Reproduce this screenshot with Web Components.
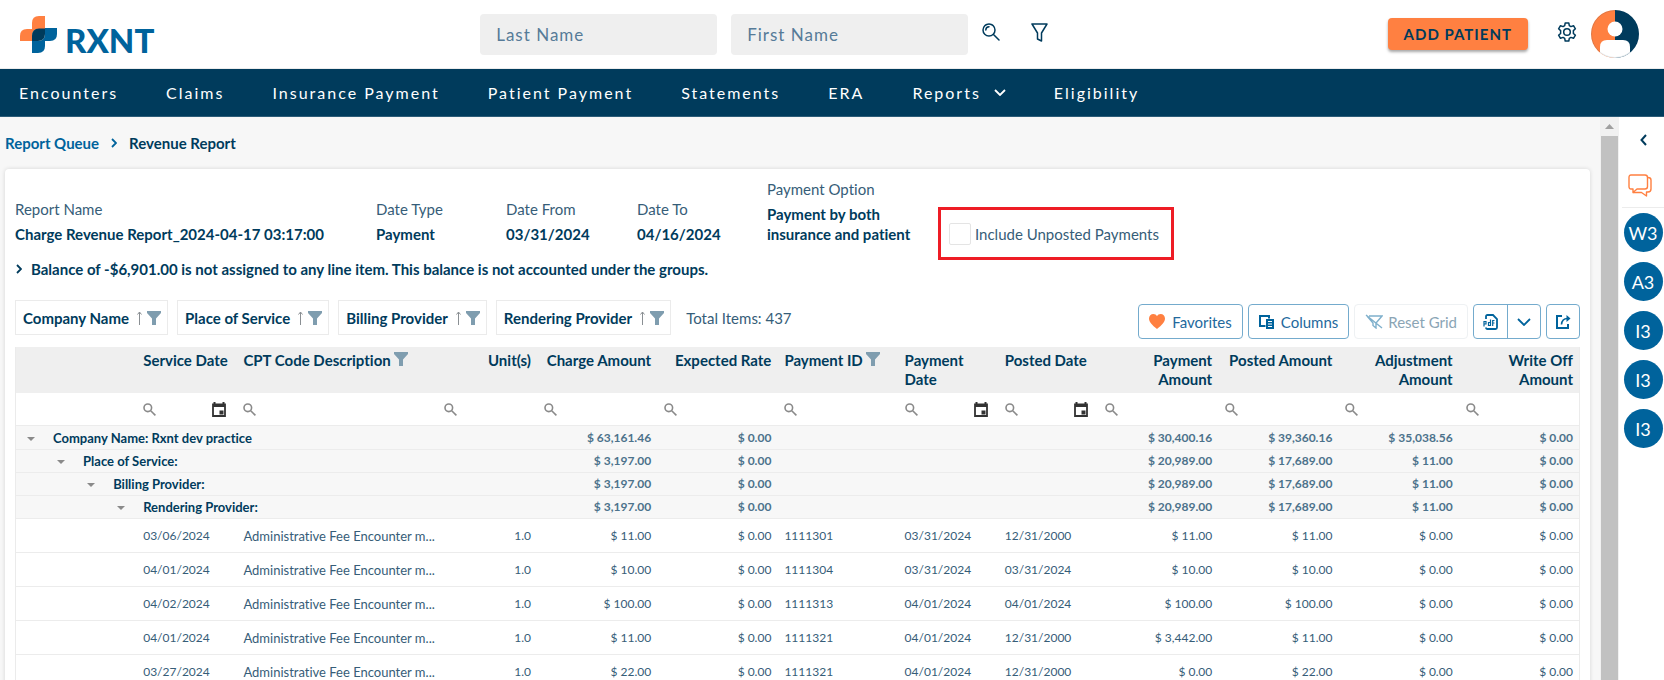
<!DOCTYPE html>
<html lang="en">
<head>
<meta charset="utf-8">
<title>RXNT - Revenue Report</title>
<style>
  html, body { margin: 0; height: 100%; }
  body {
    --navy: #003b5c;
    --blue: #00639c;
    --orange: #ff8041;
    --soft: #365d78;
    --line: #ececec;
    font: 15px/20px Lato, "Open Sans", sans-serif;
    font-variant-ligatures: none;
    color: var(--navy);
    background: #fff;
  }
</style>
</head>
<body>
<app-shell>
  <app-header slot="header"></app-header>
  <app-nav slot="nav">
    <nav-link>Encounters</nav-link>
    <nav-link>Claims</nav-link>
    <nav-link>Insurance Payment</nav-link>
    <nav-link>Patient Payment</nav-link>
    <nav-link>Statements</nav-link>
    <nav-link>ERA</nav-link>
    <nav-link menu>Reports</nav-link>
    <nav-link>Eligibility</nav-link>
  </app-nav>
  <bread-crumb>
    <span slot="parent">Report Queue</span>
    <span slot="current">Revenue Report</span>
  </bread-crumb>
  <report-card>
    <report-field slot="fields" label="Report Name">Charge Revenue Report_2024-04-17 03:17:00</report-field>
    <report-field slot="fields" label="Date Type">Payment</report-field>
    <report-field slot="fields" label="Date From">03/31/2024</report-field>
    <report-field slot="fields" label="Date To">04/16/2024</report-field>
    <report-field slot="fields" label="Payment Option">Payment by both insurance and patient</report-field>
    <check-field slot="fields">Include Unposted Payments</check-field>
    <balance-note slot="note">Balance of -$6,901.00 is not assigned to any line item. This balance is not accounted under the groups.</balance-note>
    <group-chip slot="chips">Company Name</group-chip>
    <group-chip slot="chips">Place of Service</group-chip>
    <group-chip slot="chips">Billing Provider</group-chip>
    <group-chip slot="chips">Rendering Provider</group-chip>
    <span slot="total">Total Items: 437</span>
    <tool-button slot="tools" icon="heart">Favorites</tool-button>
    <tool-button slot="tools" icon="columns">Columns</tool-button>
    <tool-button slot="tools" icon="reset" disabled>Reset Grid</tool-button>
    <split-button slot="tools"></split-button>
    <tool-button slot="tools" icon="export" label="Export"></tool-button>
    <report-grid></report-grid>
  </report-card>
  <side-rail slot="rail">
    <user-badge>W3</user-badge>
    <user-badge>A3</user-badge>
    <user-badge>I3</user-badge>
    <user-badge>I3</user-badge>
    <user-badge>I3</user-badge>
  </side-rail>
</app-shell>

<script>
const define = (name, html, setup) => {
  const template = document.createElement('template');
  template.innerHTML = html;
  customElements.define(name, class extends HTMLElement {
    constructor() {
      super();
      this.attachShadow({ mode: 'open' }).append(template.content.cloneNode(true));
    }
    connectedCallback() {
      if (setup && !this.ready) { this.ready = true; setup(this, this.shadowRoot); }
    }
  });
};

/* Icons: [width, height, markup] */
const ICONS = {
  search: [18, 18, '<g fill="none" stroke="currentColor" stroke-width="1.5" stroke-linecap="round"><circle cx="7" cy="7" r="6"/><path d="M11.5 11.5L17 17M3.8 7A3.3 3.3 0 0 1 7 3.8"/></g>'],
  funnel: [17, 19, '<path d="M1 1h15l-5.5 9v8l-4-2v-6z" fill="none" stroke="currentColor" stroke-width="1.5" stroke-linejoin="round"/>'],
  gear: [20, 20, '<g fill="none" stroke="currentColor" stroke-width="1.5" stroke-linejoin="round"><path d="M8.2 1h3.6l.5 2.6 1.6 1 2.6-.9 1.9 3.1-2 1.8v2.8l2 1.8-1.9 3.1-2.6-.9-1.6 1-.5 2.6H8.2l-.5-2.6-1.6-1-2.6.9-1.9-3.1 2-1.8V8.600l-2-1.8 1.900-3.100 2.600.9 1.600-1z"/><circle cx="10" cy="10" r="3.300"/></g>'],
  avatar: [48, 48, '<clipPath id="c"><circle cx="24" cy="24" r="24"/></clipPath><g clip-path="url(#c)"><path d="M0 0h24v48H0z" fill="#ff8041"/><path d="M24 0h24v48H24z" fill="#003b5c"/><circle cx="24" cy="19" r="7.500" fill="#fff"/><path d="M9 48V37q0-7 7-7h16q7 0 7 7v11z" fill="#fff"/></g><circle cx="24" cy="24" r="23.500" fill="none" stroke="#003b5c" stroke-opacity=".12"/>'],
  mark: [37, 37, '<path d="M12 25H0v-5q0-7 7-7h5V7q0-7 7-7h6v13h-6q-7 0-7 7z" fill="#ff8041"/><path d="M25 12h12v6q0 7-7 7h-5v5q0 7-7 7h-6V25h6q7 0 7-7z" fill="#00639c"/><path d="M12 25v-5q0-7.500 7-7.500h6V18q0 7-7 7z" fill="#003b5c"/>'],
  down: [12, 7, '<path d="M1 1l5 5 5-5" fill="none" stroke="currentColor" stroke-width="1.800"/>'],
  downWide: [14, 8, '<path d="M1 1l6 6 6-6" fill="none" stroke="currentColor" stroke-width="1.800"/>'],
  right: [6, 10, '<path d="M1 1l4 4-4 4" fill="none" stroke="currentColor" stroke-width="1.800"/>'],
  left: [7, 12, '<path d="M6 1L1.500 6 6 11" fill="none" stroke="currentColor" stroke-width="2"/>'],
  chat: [24, 23, '<g fill="none" stroke="#ff8041" stroke-width="1.400" stroke-linejoin="round"><path d="M3 1h14q2.500 0 2.500 2.500v9q0 2.500-2.500 2.500H9l-4 3.500V15H3Q1 15 1 12.500v-9Q1 1 3 1z"/><path d="M20 3.500q3 0 3 2.500v9q0 3-3 3h-1.500V22l-5-3.500H5"/></g>'],
  sort: [5, 14, '<path d="M2.500 14V1M.5 3.500l2-2.500 2 2.500" fill="none" stroke="#8a8f93"/>'],
  filter: [14, 14, '<path d="M0 0h14v2L9 7.500V14H5V7.500L0 2z" fill="#7f9daf"/>'],
  heart: [16, 15, '<path d="M8 15C3 11 0 8 0 4.500 0 2 2 0 4.300 0 6 0 7.300.9 8 2.200 8.700.9 10 0 11.700 0 14 0 16 2 16 4.500 16 8 13 11 8 15z" fill="#ff8041"/>'],
  columns: [15, 14, '<path d="M6.500 11H1V1h9v2.500" fill="none" stroke="#00639c" stroke-width="2"/><path d="M7 4h8v10H7z" fill="#00639c"/><path d="M9 6.500h4M9 9h4M9 11.500h4" stroke="#fff"/>'],
  reset: [18, 15, '<g fill="none" stroke="#7fb0cc" stroke-width="1.400"><path d="M4 2h13l-6 7v5l-3-2.500V9L2 2M1 1l16 13"/></g>'],
  pdf: [15, 16, '<path d="M3 5V2.500Q3 1 4.500 1H10l4 4v8.500q0 1.500-1.500 1.500h-8Q3 15 3 13.500" fill="none" stroke="#00639c" stroke-width="1.800"/><path d="M1 12.500V7.500h2V10H1M7.500 5.500v6H5.500V8.500h2M9.700 12V6.500h1.800M9.700 9h1.800" fill="none" stroke="#00639c" stroke-width="1.200"/>'],
  export: [15, 15, '<path d="M6 2H1v12h11v-4" fill="none" stroke="#00639c" stroke-width="2"/><path d="M5.500 10.500Q6 4.500 11.500 4.500" fill="none" stroke="#00639c" stroke-width="1.600"/><path d="M10.500 1l4 3.500-4 3.500z" fill="#00639c"/>'],
  lens: [13, 13, '<g fill="none" stroke="#8a8a8a" stroke-width="1.600"><circle cx="4.800" cy="4.800" r="3.800"/><path d="M7.700 7.700L12.400 12.400"/></g>'],
  calendar: [14, 15, '<path d="M2.500 0v3M11.500 0v3" stroke="#333" stroke-width="2"/><path d="M1 2.500h12V14H1z" fill="none" stroke="#333" stroke-width="1.800"/><path d="M1 2h12v3H1zM7.500 8.500h4v4h-4z" fill="#333"/>'],
  caret: [8, 4, '<path d="M0 0h8L4 4z" fill="#8a8a8a"/>'],
  caretUp: [9, 5, '<path d="M0 5h9L4.500 0z" fill="#a0a0a0"/>']
};
const icon = name => {
  const [w, h, body] = ICONS[name];
  return `<svg width="${w}" height="${h}" viewBox="0 0 ${w} ${h}" aria-hidden="true" style="display:block;flex:none">${body}</svg>`;
};

define('app-shell', `
  <style>
    :host { display: flex; flex-direction: column; height: 100vh; overflow: hidden; }
    .body { flex: 1; min-height: 0; display: flex; }
    main { flex: 1; min-width: 0; overflow: hidden; background: #f7f7f7; padding: 0 10px 0 5px; }
    .track { flex: none; width: 19px; display: flex; flex-direction: column; background: #f1f1f1; }
    .track button { height: 19px; border: 0; padding: 0; background: none; display: grid; place-items: center; }
    .thumb { flex: 1; margin: 0 1px; background: #c1c1c1; }
  </style>
  <slot name="header"></slot>
  <slot name="nav"></slot>
  <div class="body">
    <main><slot></slot></main>
    <div class="track"><button type="button" aria-label="Scroll up">${icon('caretUp')}</button><div class="thumb"></div></div>
    <slot name="rail"></slot>
  </div>`);

define('app-header', `
  <style>
    :host { display: block; flex: none; }
    header {
      display: grid; grid-template-columns: 461fr auto 340fr auto; align-items: center;
      height: 68px; padding: 0 25px 0 20px; border-bottom: 1px solid var(--line);
    }
    .logo { display: flex; align-items: center; gap: 8px; color: var(--blue); text-decoration: none; font: 900 33px/40px Lato, sans-serif; }
    .logo span { padding-top: 11px; }
    form { display: flex; align-items: center; }
    input {
      box-sizing: border-box; width: 237px; height: 41px; margin-right: 14px; padding: 0 16px;
      border: 0; border-radius: 4px; background: #efefef; color: var(--navy);
      font: 17px/24px Lato, sans-serif; letter-spacing: 1px;
    }
    input::placeholder { color: #567b98; opacity: 1; }
    button { border: 0; background: none; padding: 0; color: var(--navy); }
    form button { height: 41px; padding-bottom: 4px; }
    form button + button { margin-left: 31px; }
    .actions { grid-column: 4; display: flex; align-items: center; }
    .add {
      height: 32px; padding: 0 16px; margin-right: 29px; border-radius: 4px; background: var(--orange);
      font: 700 15px/20px Lato, sans-serif; letter-spacing: 1px; box-shadow: 0 2px 3px rgba(0,0,0,.35);
    }
    .gear { padding-bottom: 4px; margin-right: 14px; }
  </style>
  <header>
    <a class="logo" href="#">${icon('mark')}<span>RXNT</span></a>
    <form>
      <input type="text" aria-label="Last Name" placeholder="Last Name">
      <input type="text" aria-label="First Name" placeholder="First Name">
      <button type="button" aria-label="Search">${icon('search')}</button>
      <button type="button" aria-label="Filter">${icon('funnel')}</button>
    </form>
    <div class="actions">
      <button class="add" type="button">ADD PATIENT</button>
      <button class="gear" type="button" aria-label="Settings">${icon('gear')}</button>
      <button type="button" aria-label="Account">${icon('avatar')}</button>
    </div>
  </header>`);

define('app-nav', `
  <style>
    :host { display: block; flex: none; background: var(--navy); border-bottom: 1px solid #2c5c78; }
    nav { display: flex; align-items: center; gap: 48px; height: 47px; padding: 0 19px; }
  </style>
  <nav><slot></slot></nav>`);

define('nav-link', `
  <style>
    :host { display: block; }
    a { display: flex; align-items: center; gap: 13px; color: #fff; text-decoration: none; font-size: 16px; line-height: 24px; letter-spacing: 2px; white-space: nowrap; }
  </style>
  <a href="#"><slot></slot></a>`, (host, root) => {
    if (host.hasAttribute('menu')) root.querySelector('a').insertAdjacentHTML('beforeend', icon('down'));
  });

define('bread-crumb', `
  <style>
    :host { display: block; }
    nav { display: flex; align-items: center; gap: 12px; height: 52px; font-weight: 700; color: var(--navy); }
    a { color: var(--blue); text-decoration: none; }
    svg { color: var(--blue); }
  </style>
  <nav aria-label="Breadcrumb"><a href="#"><slot name="parent"></slot></a>${icon('right')}<slot name="current"></slot></nav>`);

define('report-card', `
  <style>
    :host { display: block; box-sizing: border-box; padding: 10px; background: #fff; border-radius: 4px; box-shadow: 0 0 4px rgba(0,0,0,.14); }
    .fields { display: grid; grid-template-columns: 361fr 130fr 131fr 130fr 171fr 642fr; align-items: end; }
    .note { margin-top: 15px; }
    .bar { display: flex; align-items: flex-end; justify-content: space-between; margin: 21px 0 8px; }
    .chips, .tools { display: flex; align-items: center; white-space: nowrap; }
    .chips { gap: 9px; padding-bottom: 4px; }
    .tools { gap: 5px; }
    .total { margin-left: 6px; color: var(--soft); }
  </style>
  <div class="fields"><slot name="fields"></slot></div>
  <div class="note"><slot name="note"></slot></div>
  <div class="bar">
    <div class="chips"><slot name="chips"></slot><div class="total"><slot name="total"></slot></div></div>
    <div class="tools"><slot name="tools"></slot></div>
  </div>
  <slot></slot>`);

define('report-field', `
  <style>
    :host { display: block; min-width: 0; }
    .label { color: var(--soft); margin-bottom: 5px; }
    .value { font-weight: 700; padding-right: 16px; }
  </style>
  <div class="label"></div><div class="value"><slot></slot></div>`, (host, root) => {
    root.querySelector('.label').textContent = host.getAttribute('label');
  });

define('check-field', `
  <style>
    :host { display: block; justify-self: start; margin-bottom: -16px; }
    label { display: flex; align-items: center; gap: 4px; height: 47px; padding: 0 12px 0 8px; border: 3px solid #ee1c25; color: var(--soft); white-space: nowrap; }
    input { appearance: none; width: 22px; height: 22px; margin: 0; border: 1px solid #e4e4e4; border-radius: 2px; background: #fff; }
    input:checked { background: var(--blue); }
  </style>
  <label><input type="checkbox"><slot></slot></label>`);

define('balance-note', `
  <style>
    :host { display: block; }
    button { display: flex; align-items: center; gap: 9px; padding: 0 1px; border: 0; background: none; color: var(--navy); font: 700 15px/20px Lato, sans-serif; text-align: left; }
  </style>
  <button type="button" aria-expanded="false">${icon('right')}<span><slot></slot></span></button>`);

define('group-chip', `
  <style>
    :host { display: flex; align-items: center; height: 33px; padding: 0 6px 0 7px; border: 1px solid #ebebeb; font-weight: 700; }
    button { border: 0; padding: 0; background: none; }
    .sort { margin: 0 5px 0 8px; }
  </style>
  <slot></slot>
  <button class="sort" type="button" aria-label="Sort ascending">${icon('sort')}</button>
  <button type="button" aria-label="Filter">${icon('filter')}</button>`);

define('tool-button', `
  <style>
    :host { display: block; }
    button { display: flex; align-items: center; gap: 7px; height: 35px; padding: 0 10px; border: 1px solid #74abcd; border-radius: 4px; background: #fff; color: #23699d; font: 15px/20px Lato, sans-serif; }
    button:disabled { gap: 5px; border-color: #eef1f3; color: #8ba5b5; }
    button[aria-label] { width: 34px; padding: 0; justify-content: center; }
  </style>
  <button type="button"></button>`, (host, root) => {
    const button = root.querySelector('button');
    const label = host.getAttribute('label');
    button.disabled = host.hasAttribute('disabled');
    if (label) button.setAttribute('aria-label', label);
    button.innerHTML = icon(host.getAttribute('icon')) + (label ? '' : '<span><slot></slot></span>');
  });

define('split-button', `
  <style>
    :host { display: flex; border: 1px solid #74abcd; border-radius: 4px; height: 33px; }
    button { width: 33px; display: grid; place-items: center; padding: 0; border: 0; background: none; color: var(--blue); }
    button + button { border-left: 1px solid #74abcd; }
  </style>
  <button type="button" aria-label="Export as PDF">${icon('pdf')}</button>
  <button type="button" aria-label="More formats">${icon('downWide')}</button>`);

define('side-rail', `
  <style>
    :host { flex: none; display: block; width: 45px; background: #fff; }
    button { display: grid; place-items: center; width: 100%; padding: 0; border: 0; background: none; color: var(--navy); }
    .collapse { height: 46px; padding-left: 3px; }
    .chat { height: 44px; padding-right: 4px; }
    .people { display: flex; flex-direction: column; align-items: center; gap: 10px; padding-top: 5px; border-top: 1px solid var(--line); margin-left: 3px; }
  </style>
  <button class="collapse" type="button" aria-label="Collapse panel">${icon('left')}</button>
  <button class="chat" type="button" aria-label="Messages">${icon('chat')}</button>
  <div class="people"><slot></slot></div>`);

define('user-badge', `
  <style>
    :host { display: block; }
    button { display: block; width: 39px; height: 39px; padding: 0; border: 0; border-radius: 50%; background: var(--blue); color: #fff; font: 18px/24px Lato, sans-serif; }
  </style>
  <button type="button"><slot></slot></button>`);

/* Columns: title, relative width, numeric alignment, title filter, date picker */
const COLUMNS = [
  { title: 'Service Date', width: 100, date: true },
  { title: 'CPT Code Description', width: 200, filter: true },
  { title: 'Unit(s)', width: 100, num: true },
  { title: 'Charge Amount', width: 120, num: true },
  { title: 'Expected Rate', width: 120, num: true },
  { title: 'Payment ID', width: 120, filter: true },
  { title: 'Payment<br>Date', width: 100, date: true },
  { title: 'Posted Date', width: 100, date: true },
  { title: 'Payment<br>Amount', width: 120, num: true },
  { title: 'Posted Amount', width: 120, num: true },
  { title: 'Adjustment<br>Amount', width: 120, num: true },
  { title: 'Write Off<br>Amount', width: 120, num: true }
];
const GROUPS = [
  ['Company Name: Rxnt dev practice', '$ 63,161.46', '$ 0.00', '', '', '', '$ 30,400.16', '$ 39,360.16', '$ 35,038.56', '$ 0.00'],
  ['Place of Service:', '$ 3,197.00', '$ 0.00', '', '', '', '$ 20,989.00', '$ 17,689.00', '$ 11.00', '$ 0.00'],
  ['Billing Provider:', '$ 3,197.00', '$ 0.00', '', '', '', '$ 20,989.00', '$ 17,689.00', '$ 11.00', '$ 0.00'],
  ['Rendering Provider:', '$ 3,197.00', '$ 0.00', '', '', '', '$ 20,989.00', '$ 17,689.00', '$ 11.00', '$ 0.00']
];
const FEE = 'Administrative Fee Encounter m...';
const ROWS = [
  ['03/06/2024', FEE, '1.0', '$ 11.00', '$ 0.00', '1111301', '03/31/2024', '12/31/2000', '$ 11.00', '$ 11.00', '$ 0.00', '$ 0.00'],
  ['04/01/2024', FEE, '1.0', '$ 10.00', '$ 0.00', '1111304', '03/31/2024', '03/31/2024', '$ 10.00', '$ 10.00', '$ 0.00', '$ 0.00'],
  ['04/02/2024', FEE, '1.0', '$ 100.00', '$ 0.00', '1111313', '04/01/2024', '04/01/2024', '$ 100.00', '$ 100.00', '$ 0.00', '$ 0.00'],
  ['04/01/2024', FEE, '1.0', '$ 11.00', '$ 0.00', '1111321', '04/01/2024', '12/31/2000', '$ 3,442.00', '$ 11.00', '$ 0.00', '$ 0.00'],
  ['03/27/2024', FEE, '1.0', '$ 22.00', '$ 0.00', '1111321', '04/01/2024', '12/31/2000', '$ 0.00', '$ 22.00', '$ 0.00', '$ 0.00']
];
const cls = i => COLUMNS[i].num ? ' class="num"' : '';
const plain = t => t.replace('<br>', ' ');

define('report-grid', `
  <style>
    :host { display: block; border: solid #ebebeb; border-width: 0 1px; }
    table { width: 100%; table-layout: fixed; border-collapse: separate; border-spacing: 0; font-size: 12px; line-height: 16px; color: var(--soft); }
    th, td { padding: 0 7px; text-align: left; white-space: nowrap; box-sizing: border-box; }
    .num { text-align: right; padding-right: 6px; }
    .titles th { height: 46px; padding-top: 4px; vertical-align: top; background: #efefef; font-size: 15px; line-height: 19px; color: var(--navy); }
    .titles svg { margin: 1px 0 0 3px; }
    .head { display: flex; }
    .num .head { justify-content: flex-end; }
    .filters td { height: 32px; }
    .filters div { display: flex; align-items: center; height: 32px; }
    button { flex: none; display: grid; place-items: center; padding: 0; border: 0; background: none; }
    input { flex: 1; min-width: 0; width: 0; height: 24px; padding: 0 4px; border: 0; background: none; font: 12px/16px Lato, sans-serif; color: var(--navy); }
    .date { margin-right: 3px; }
    .group td { height: 23px; border-top: 1px solid var(--line); background: #f7f7f7; font-weight: 700; color: #4c728b; }
    .group:first-child td { height: 24px; }
    .group .name { font-size: 13px; color: var(--navy); }
    .group .toggle { padding: 0; }
    .group button { width: 100%; padding-top: 2px; }
    .item td { height: 34px; border-bottom: 1px solid var(--line); }
    .item:nth-child(5) td { height: 35px; border-top: 1px solid var(--line); }
    .item .text { font-size: 13px; padding-right: 0; }
  </style>
  <table>
    <colgroup><col style="width:30px"><col style="width:30px"><col style="width:30px"><col style="width:30px">${COLUMNS.map(c => `<col style="width:${c.width}px">`).join('')}</colgroup>
    <thead>
      <tr class="titles"><th colspan="4"></th>${COLUMNS.map((c, i) => `<th scope="col"${cls(i)}><div class="head"><span>${c.title}</span>${c.filter ? icon('filter') : ''}</div></th>`).join('')}</tr>
      <tr class="filters"><td colspan="4"></td>${COLUMNS.map(c => `<td><div><button type="button" aria-label="Search ${plain(c.title)}">${icon('lens')}</button><input type="text" aria-label="${plain(c.title)}">${c.date ? `<button class="date" type="button" aria-label="Pick date">${icon('calendar')}</button>` : ''}</div></td>`).join('')}</tr>
    </thead>
    <tbody>
      ${GROUPS.map(([name, ...cells], level) => `<tr class="group">${level ? `<td colspan="${level}"></td>` : ''}<td class="toggle"><button type="button" aria-label="Collapse group">${icon('caret')}</button></td><td class="name" colspan="${6 - level}">${name}</td>${cells.map((c, i) => `<td${cls(i + 3)}>${c}</td>`).join('')}</tr>`).join('')}
      ${ROWS.map(cells => `<tr class="item"><td colspan="4"></td>${cells.map((c, i) => `<td${i === 1 ? ' class="text"' : cls(i)}>${c}</td>`).join('')}</tr>`).join('')}
    </tbody>
  </table>`);
</script>
</body>
</html>
